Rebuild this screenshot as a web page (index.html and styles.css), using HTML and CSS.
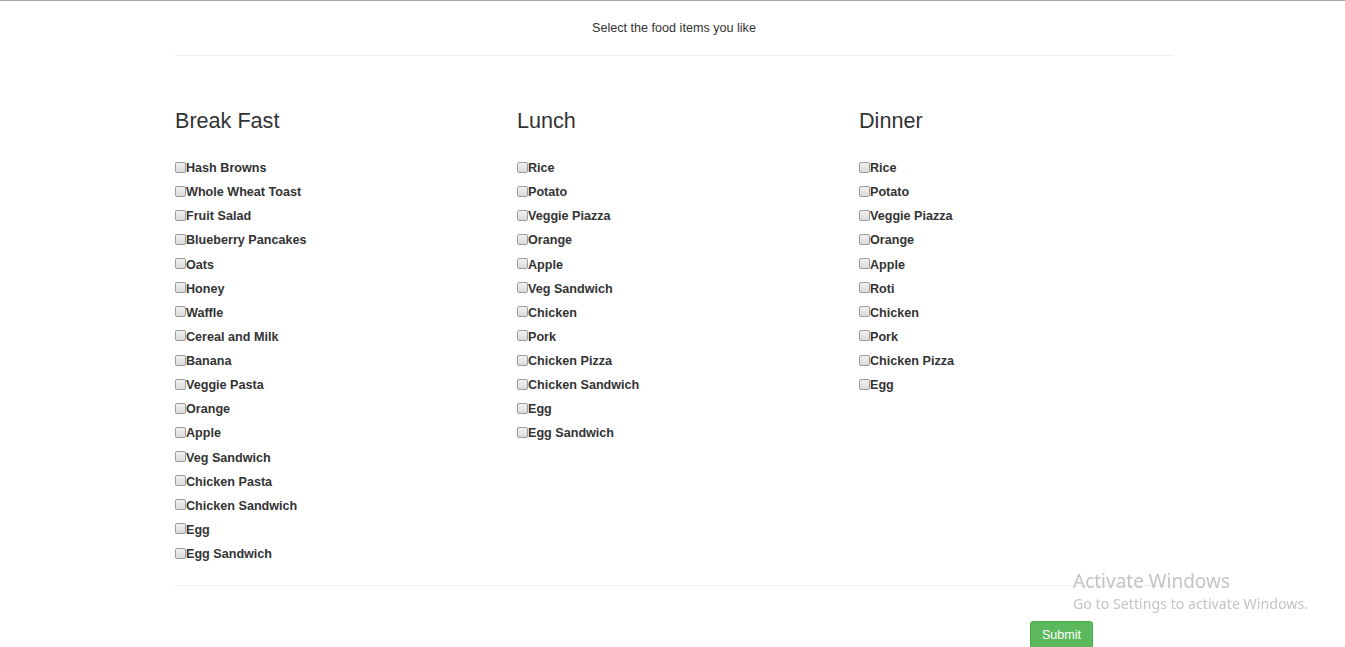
FILE: index.html
```html
<!DOCTYPE html>
<html>
<head>
<meta charset="utf-8">
<title>Food selection</title>
<link rel="stylesheet" href="styles.css">
</head>
<body>
<div class="page">
  <div class="intro">Select the food items you like</div>
  <hr class="rule rule-top">
  <form class="menu">
    <div class="meal">
      <h3 class="meal-title">Break Fast</h3>
      <label class="item"><input type="checkbox">Hash Browns</label>
      <label class="item"><input type="checkbox">Whole Wheat Toast</label>
      <label class="item"><input type="checkbox">Fruit Salad</label>
      <label class="item"><input type="checkbox">Blueberry Pancakes</label>
      <label class="item"><input type="checkbox">Oats</label>
      <label class="item"><input type="checkbox">Honey</label>
      <label class="item"><input type="checkbox">Waffle</label>
      <label class="item"><input type="checkbox">Cereal and Milk</label>
      <label class="item"><input type="checkbox">Banana</label>
      <label class="item"><input type="checkbox">Veggie Pasta</label>
      <label class="item"><input type="checkbox">Orange</label>
      <label class="item"><input type="checkbox">Apple</label>
      <label class="item"><input type="checkbox">Veg Sandwich</label>
      <label class="item"><input type="checkbox">Chicken Pasta</label>
      <label class="item"><input type="checkbox">Chicken Sandwich</label>
      <label class="item"><input type="checkbox">Egg</label>
      <label class="item"><input type="checkbox">Egg Sandwich</label>
    </div>
    <div class="meal">
      <h3 class="meal-title">Lunch</h3>
      <label class="item"><input type="checkbox">Rice</label>
      <label class="item"><input type="checkbox">Potato</label>
      <label class="item"><input type="checkbox">Veggie Piazza</label>
      <label class="item"><input type="checkbox">Orange</label>
      <label class="item"><input type="checkbox">Apple</label>
      <label class="item"><input type="checkbox">Veg Sandwich</label>
      <label class="item"><input type="checkbox">Chicken</label>
      <label class="item"><input type="checkbox">Pork</label>
      <label class="item"><input type="checkbox">Chicken Pizza</label>
      <label class="item"><input type="checkbox">Chicken Sandwich</label>
      <label class="item"><input type="checkbox">Egg</label>
      <label class="item"><input type="checkbox">Egg Sandwich</label>
    </div>
    <div class="meal">
      <h3 class="meal-title">Dinner</h3>
      <label class="item"><input type="checkbox">Rice</label>
      <label class="item"><input type="checkbox">Potato</label>
      <label class="item"><input type="checkbox">Veggie Piazza</label>
      <label class="item"><input type="checkbox">Orange</label>
      <label class="item"><input type="checkbox">Apple</label>
      <label class="item"><input type="checkbox">Roti</label>
      <label class="item"><input type="checkbox">Chicken</label>
      <label class="item"><input type="checkbox">Pork</label>
      <label class="item"><input type="checkbox">Chicken Pizza</label>
      <label class="item"><input type="checkbox">Egg</label>
    </div>
  </form>
  <hr class="rule rule-bottom">
  <div class="actions">
    <button type="button" class="btn-submit">Submit</button>
  </div>
</div>
<div class="watermark">
  <div class="wm-title">Activate Windows</div>
  <div class="wm-sub">Go to Settings to activate Windows.</div>
</div>
</body>
</html>
```

FILE: styles.css
```css
html, body {
  margin: 0;
  padding: 0;
  background: #fff;
}
body {
  border-top: 1px solid #a9a9a9;
  font-family: "Liberation Sans", Arial, Helvetica, sans-serif;
  font-size: 12.6px;
  color: #333;
  overflow: hidden;
  height: 646px;
}
.page {
  width: 998px;
  margin-left: 175px;
}
.intro {
  padding-top: 18px;
  line-height: 18px;
  text-align: center;
}
.rule {
  border: 0;
  border-top: 1px solid #eee;
  height: 0;
  margin: 0;
}
.rule-top {
  margin-top: 18px;
}
.menu {
  display: grid;
  grid-template-columns: 342px 342px 314px;
  margin-top: 53px;
}
.meal {
  display: flex;
  flex-direction: column;
}
.meal-title {
  margin: 0 0 23px 0;
  font-size: 21.6px;
  font-weight: 400;
  line-height: 24px;
  color: #333;
}
.item {
  display: flex;
  align-items: center;
  height: 24.125px;
  font-weight: 700;
  font-size: 12.6px;
  color: #333;
}
.item input {
  -webkit-appearance: none;
  appearance: none;
  box-sizing: border-box;
  width: 11px;
  height: 11px;
  margin: -2px 0 0 0;
  border: 1px solid #9b9b9b;
  border-radius: 2px;
  background: linear-gradient(#f0f0f0, #dcdcdc);
}
.rule-bottom {
  margin-top: 19px;
}
.actions {
  display: flex;
  padding-left: 855px;
  padding-top: 35px;
}
.btn-submit {
  width: 63px;
  height: 31px;
  border: 1px solid #4cae4c;
  border-radius: 3px;
  background: #5cb85c;
  color: #fff;
  font-family: "Liberation Sans", Arial, sans-serif;
  font-size: 12.6px;
  line-height: 17px;
  padding: 0 0 3px 0;
}
.watermark {
  position: fixed;
  left: 1073px;
  top: 569px;
  color: #c4c4c4;
  font-family: "Noto Sans", "Open Sans", sans-serif;
}
.wm-title {
  font-size: 19px;
  line-height: 25px;
}
.wm-sub {
  font-size: 14.2px;
  line-height: 20px;
}
```
